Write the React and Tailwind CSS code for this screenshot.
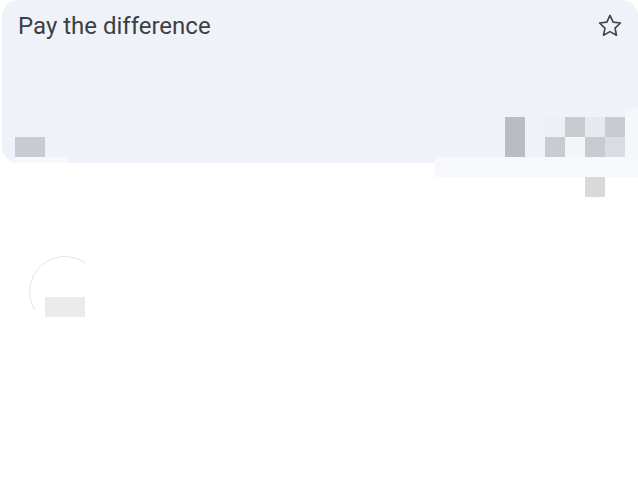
const PIXELS = [
  'bg-[#b9bcc1]', 'bg-transparent', 'bg-[#edf0f5]', 'bg-[#c8cbd0]', 'bg-[#e6e9ee]', 'bg-[#c8cbd0]',
  'bg-[#b9bcc1]', 'bg-transparent', 'bg-[#c8cbd0]', 'bg-[#f3f5f9]', 'bg-[#c8cbd0]', 'bg-[#d9dce1]',
]

function Star() {
  return (
    <svg width="24" height="24" viewBox="2 2 20 20" fill="none" stroke="#444746" strokeWidth="1.4" strokeLinejoin="round">
      <path d="M12 3.2l2.6 5.6 6.1.7-4.5 4.2 1.2 6-5.4-3-5.4 3 1.2-6-4.5-4.2 6.1-.7z" />
    </svg>
  )
}

export default function App() {
  return (
    <div className="relative w-[638px] h-[488px] bg-white overflow-hidden" style={{ fontFamily: 'Roboto, "Open Sans", sans-serif' }}>
      <div className="ml-[2px] h-[163px] rounded-2xl bg-[#eff2f8] flex flex-col justify-between pb-[6px]">
        <div className="flex items-start justify-between pl-4 pr-[16px] pt-[9px]">
          <h1 className="text-[24px] leading-[34px] text-[#3c4043]">Pay the difference</h1>
          <div className="pt-[5px]">
            <Star />
          </div>
        </div>
        <div className="flex items-end justify-between pl-[13px] pr-[13px]">
          <div className="w-[30px] h-[20px] bg-[#c8cbd0]" />
          <div className="grid grid-cols-[repeat(6,20px)] grid-rows-[repeat(2,20px)]">
            {PIXELS.map((c, i) => (
              <div key={i} className={c} />
            ))}
          </div>
        </div>
      </div>

      <div className="absolute left-[625px] top-[108px] w-[13px] h-[55px] bg-[#f5f7fb]" />
      <div className="absolute left-[15px] top-[157px] w-[53px] h-[6px] bg-[#f6f8fc]" />
      <div className="absolute left-[435px] top-[157px] w-[203px] h-[20px] bg-[#f6f8fc]" />
      <div className="absolute left-[585px] top-[177px] w-[20px] h-[20px] bg-[#d9d9d9]" />

      <div className="relative mt-[89px] ml-[25px] w-[80px] h-[80px] flex items-end justify-center pb-[15px]">
        <svg className="absolute inset-0" width="80" height="80" viewBox="0 0 80 80" fill="none">
          <path d="M10 58 A35 35 0 0 1 60 11" stroke="#e3e3e3" strokeWidth="1" />
        </svg>
        <div className="w-[40px] h-[20px] bg-[#ebebeb]" />
      </div>
    </div>
  )
}
